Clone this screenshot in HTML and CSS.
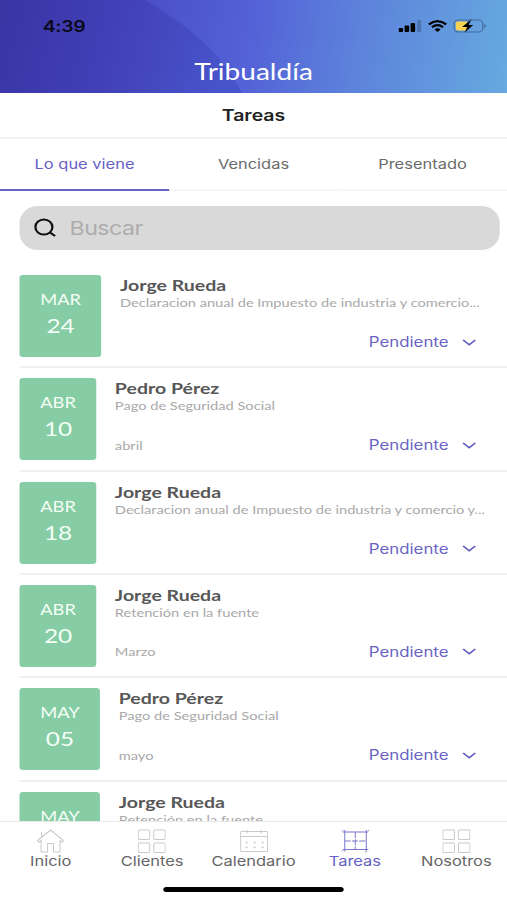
FILE: index.html
```html
<!DOCTYPE html>
<html lang="es">
<head>
  <meta charset="UTF-8" />
  <meta name="viewport" content="width=device-width, initial-scale=1.0" />
  <title>Tareas - Tribualdía</title>

  <link rel="stylesheet" href="styles.css">
</head>
<body>
  <div class="app">
    <header class="header">
      <svg class="header-bg" viewBox="0 0 507 93" preserveAspectRatio="none">
        <defs>
          <linearGradient id="bgDark" gradientUnits="userSpaceOnUse" x1="0" y1="0" x2="225" y2="60">
            <stop offset="0" stop-color="#3a34a4" />
            <stop offset="0.5" stop-color="#4240b7" />
            <stop offset="1" stop-color="#4854ca" />
          </linearGradient>
          <linearGradient id="bgLight" gradientUnits="userSpaceOnUse" x1="150" y1="0" x2="507" y2="60">
            <stop offset="0" stop-color="#4c50c8" />
            <stop offset="0.3" stop-color="#5463d7" />
            <stop offset="0.6" stop-color="#5d84db" />
            <stop offset="1" stop-color="#66a8e0" />
          </linearGradient>
        </defs>
        <rect width="507" height="93" fill="url(#bgLight)" />
        <path d="M0 0H145Q218 42 242 93H0Z" fill="url(#bgDark)" />
      </svg>
      <div class="status-bar">
        <span class="time">4:39</span>
        <div class="status-icons">
          <svg width="19" height="12" viewBox="0 0 23 12" preserveAspectRatio="none">
            <rect x="0" y="8" width="4.500" height="4" rx="1" />
            <rect x="6" y="5.500" width="4.500" height="6.500" rx="1" />
            <rect x="12" y="3" width="4.500" height="9" rx="1" />
            <rect x="18.500" y="0" width="4" height="12" rx="1" opacity="0.2" />
          </svg>
          <svg width="16" height="12" viewBox="0 0 17 12" preserveAspectRatio="none">
            <path d="M1 4.400Q8.500-2.200 16 4.400M3.700 7.200Q8.500 3 13.300 7.200" fill="none" stroke="#000" stroke-width="2.100" />
            <path d="M5.900 9.400Q8.500 7.300 11.100 9.400L8.500 12Z" />
          </svg>
          <svg width="27" height="14" viewBox="0 0 27 14">
            <rect x="0.600" y="1" width="23.500" height="12" rx="3.500" fill="none" stroke="#2f4d78" stroke-opacity="0.6" />
            <path d="M25.200 5v4q1.500-.5 1.500-2t-1.500-2z" fill="#2f4d78" opacity="0.6" />
            <path d="M3.800 2.500H11v9H3.800Q2 11.500 2 9.700V4.300Q2 2.500 3.800 2.500Z" fill="#f8d253" />
            <path d="M14.800 0.300L7.200 7.900H11.400L9.300 13.500L16.300 6H12.500Z" />
          </svg>
        </div>
      </div>
      <h1 class="brand">Tribualdía</h1>
    </header>

    <h2 class="page-title">Tareas</h2>

    <nav class="tabs">
      <a class="tab active"><span>Lo que viene</span></a>
      <a class="tab"><span>Vencidas</span></a>
      <a class="tab"><span>Presentado</span></a>
    </nav>

    <div class="search">
      <svg width="18" height="20" viewBox="0 0 18 20" fill="none" stroke="#111" stroke-width="1.900" preserveAspectRatio="none">
        <ellipse cx="8" cy="9" rx="7" ry="7.500" />
        <path d="M13 14.500L17.200 18" />
      </svg>
      <span class="search-text">Buscar</span>
    </div>

    <main class="tasks">
      <article class="task">
        <div class="date"><span class="month">MAR</span><span class="day">24</span></div>
        <div class="info">
          <h3>Jorge Rueda</h3>
          <p class="desc">Declaracion anual de Impuesto de industria y comercio...</p>
          <div class="status"><span class="period"></span><span class="state">Pendiente</span><svg class="chevron" viewBox="0 0 12 7"><path d="M1 1L6 5.700L11 1" /></svg></div>
        </div>
      </article>
      <article class="task">
        <div class="date"><span class="month">ABR</span><span class="day">10</span></div>
        <div class="info">
          <h3>Pedro Pérez</h3>
          <p class="desc">Pago de Seguridad Social</p>
          <div class="status"><span class="period">abril</span><span class="state">Pendiente</span><svg class="chevron" viewBox="0 0 12 7"><path d="M1 1L6 5.700L11 1" /></svg></div>
        </div>
      </article>
      <article class="task">
        <div class="date"><span class="month">ABR</span><span class="day">18</span></div>
        <div class="info">
          <h3>Jorge Rueda</h3>
          <p class="desc">Declaracion anual de Impuesto de industria y comercio y...</p>
          <div class="status"><span class="period"></span><span class="state">Pendiente</span><svg class="chevron" viewBox="0 0 12 7"><path d="M1 1L6 5.700L11 1" /></svg></div>
        </div>
      </article>
      <article class="task">
        <div class="date"><span class="month">ABR</span><span class="day">20</span></div>
        <div class="info">
          <h3>Jorge Rueda</h3>
          <p class="desc">Retención en la fuente</p>
          <div class="status"><span class="period">Marzo</span><span class="state">Pendiente</span><svg class="chevron" viewBox="0 0 12 7"><path d="M1 1L6 5.700L11 1" /></svg></div>
        </div>
      </article>
      <article class="task">
        <div class="date"><span class="month">MAY</span><span class="day">05</span></div>
        <div class="info">
          <h3>Pedro Pérez</h3>
          <p class="desc">Pago de Seguridad Social</p>
          <div class="status"><span class="period">mayo</span><span class="state">Pendiente</span><svg class="chevron" viewBox="0 0 12 7"><path d="M1 1L6 5.700L11 1" /></svg></div>
        </div>
      </article>
      <article class="task">
        <div class="date"><span class="month">MAY</span></div>
        <div class="info">
          <h3>Jorge Rueda</h3>
          <p class="desc">Retención en la fuente</p>
        </div>
      </article>
    </main>

    <footer class="bottom">
      <nav class="bottom-nav">
        <a class="nav-item">
          <svg viewBox="0 0 28 24" preserveAspectRatio="none"><path d="M1 11.500L14 1L27 11.500L25.500 13L23.500 11.500V23H17V14.500H11V23H4.500V11.500L2.500 13ZM5 8V3" /></svg>
          <span>Inicio</span>
        </a>
        <a class="nav-item">
          <svg viewBox="0 0 28 24" preserveAspectRatio="none"><rect x="0.500" y="1" width="11.500" height="9.500" rx="1.500" /><rect x="16" y="1" width="11.500" height="9.500" rx="1.500" /><rect x="0.500" y="14" width="11.500" height="9.500" rx="1.500" /><rect x="16" y="14" width="11.500" height="9.500" rx="1.500" /></svg>
          <span>Clientes</span>
        </a>
        <a class="nav-item">
          <svg viewBox="0 0 28 24" preserveAspectRatio="none"><rect x="0.500" y="2.500" width="27" height="20" rx="1" /><path d="M0.500 7.500H27.500M7 1V4.500M21 1V4.500" /><path d="M5.500 13.500H24M5.500 18.500H24" stroke-width="1.600" stroke-dasharray="2 6" /></svg>
          <span>Calendario</span>
        </a>
        <a class="nav-item active">
          <svg viewBox="0 0 28 24" preserveAspectRatio="none"><path d="M3.500 1V22.500M25 1V22.500M1.500 3H27M1.500 20.500H27" /><path d="M14 3V20.500M3.500 12H25" stroke-dasharray="6 1.200" /><path d="M0.500 2L2 1M26.500 1L28 2M0.500 22.500L2 21.500M24 23.500L25 22" opacity="0.6" /></svg>
          <span>Tareas</span>
        </a>
        <a class="nav-item">
          <svg viewBox="0 0 28 24" preserveAspectRatio="none"><rect x="0.500" y="1" width="11.500" height="9.500" rx="0.800" /><rect x="16" y="1" width="11.500" height="9.500" rx="0.800" /><rect x="0.500" y="14" width="11.500" height="9.500" rx="0.800" /><rect x="16" y="14" width="11.500" height="9.500" rx="0.800" /></svg>
          <span>Nosotros</span>
        </a>
      </nav>
      <div class="home-bar"></div>
    </footer>
  </div>
</body>
</html>
```
FILE: styles.css
```css
* {
  box-sizing: border-box;
}

body {
  margin: 0;
  height: 900px;
  overflow: hidden;
  background: #fff;
  font-family: "Inter", sans-serif;
}

h1, h2, h3, p {
  margin: 0;
}

/* 416px layout widened to fill the 507px screen */
.app {
  width: 416px;
  height: 900px;
  display: flex;
  flex-direction: column;
  overflow: hidden;
  transform: scaleX(1.21875);
  transform-origin: 0 0;
}

.header {
  position: relative;
  flex: none;
  height: 93px;
  color: #fff;
}

.header-bg {
  position: absolute;
  inset: 0;
  width: 100%;
  height: 100%;
}

.status-bar {
  position: relative;
  display: flex;
  justify-content: space-between;
  align-items: center;
  height: 52px;
  padding: 0 17px 0 35px;
}

.time {
  color: #0a0a1c;
  font-size: 16px;
  font-weight: 600;
  letter-spacing: -0.3px;
}

.status-icons {
  display: flex;
  align-items: center;
  gap: 5px;
}

.brand {
  position: relative;
  font-family: "Lato", sans-serif;
  font-size: 23px;
  font-weight: 400;
  line-height: 38px;
  text-align: center;
}

.page-title {
  flex: none;
  height: 46px;
  border-bottom: 2px solid #f3f3f3;
  color: #222;
  font-size: 16px;
  font-weight: 600;
  line-height: 45px;
  text-align: center;
}

.tabs {
  flex: none;
  display: flex;
  height: 52px;
}

.tab {
  flex: 1;
  border-bottom: 2px solid #f6f6f6;
  color: #6b6b6b;
  font-size: 13.500px;
  letter-spacing: 0;
  line-height: 51px;
  text-align: center;
}

.tab.active {
  border-bottom-color: #6065bf;
  color: #6661c4;
}

.search {
  flex: none;
  display: flex;
  align-items: center;
  gap: 11px;
  height: 44px;
  margin: 15px 6px 0 16px;
  padding-left: 12px;
  border-radius: 15px / 17px;
  background: #d9d9d9;
}

.search-text {
  color: #adadad;
  font-size: 19px;
  letter-spacing: -0.400px;
}

.tasks {
  flex: 1;
  min-height: 0;
  overflow: hidden;
  padding: 25px 0 0 16px;
}

.task {
  display: flex;
  gap: 15px;
  height: 93.330px;
  margin-bottom: 10px;
  border-bottom: 2px solid #f0f0f0;
}

.date {
  display: flex;
  flex-direction: column;
  align-items: center;
  height: 82px;
  padding: 12px 17px 0;
  border-radius: 3px;
  background: #86cca5;
  color: #f4fff6;
  font-family: "Lato", sans-serif;
}

.month {
  font-size: 15px;
  line-height: 25px;
}

.day {
  font-size: 20px;
  line-height: 26px;
}

.info {
  flex: 1;
  min-width: 0;
  font-family: "Lato", sans-serif;
}

.info h3 {
  color: #575757;
  font-size: 16px;
  font-weight: 700;
  line-height: 20px;
}

.desc {
  color: #a9a9a9;
  font-size: 12px;
  line-height: 15px;
  white-space: nowrap;
}

.status {
  display: flex;
  align-items: center;
  height: 20px;
  margin-top: 22px;
  padding-right: 25px;
}

.period {
  flex: 1;
  color: #a9a9a9;
  font-size: 12px;
}

.state {
  color: #6964c3;
  font-family: "Inter", sans-serif;
  font-size: 13.800px;
}

.chevron {
  width: 12px;
  height: 7px;
  margin-left: 11px;
  fill: none;
  stroke: #5e59bd;
  stroke-width: 1.500;
}

.bottom {
  flex: none;
  height: 79px;
  border-top: 1px solid #e9e9e9;
  background: #fff;
}

.bottom-nav {
  display: flex;
}

.nav-item {
  flex: 1;
  display: flex;
  flex-direction: column;
  align-items: center;
  padding-top: 7px;
  color: #666;
  font-size: 13.500px;
}

.nav-item svg {
  width: 23px;
  height: 24px;
  fill: none;
  stroke: #c9c9c9;
  stroke-width: 1;
}

.nav-item span {
  line-height: 17px;
}

.nav-item.active {
  color: #6661c4;
}

.nav-item.active svg {
  stroke: #7a77cb;
}

.home-bar {
  width: 148px;
  height: 5px;
  margin: 17px auto 0;
  border-radius: 3px;
  background: #000;
}
```
